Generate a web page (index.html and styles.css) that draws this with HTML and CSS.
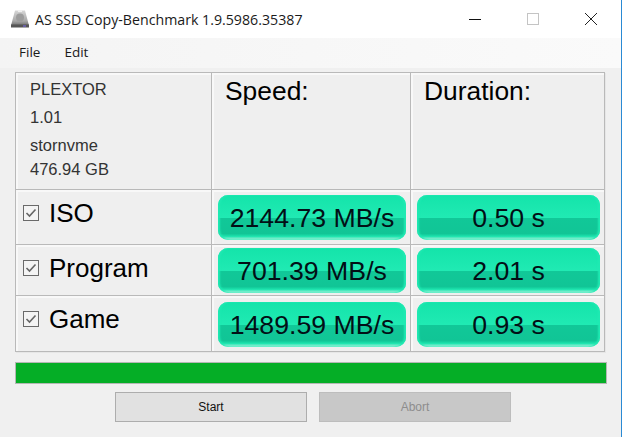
FILE: index.html
```html
<!DOCTYPE html>
<html lang="en">
<head>
<meta charset="utf-8">
<title>AS SSD Copy-Benchmark</title>
<link rel="stylesheet" href="styles.css">
</head>
<body>
<div class="window">
  <header class="titlebar">
    <svg class="appicon" width="20" height="20" viewBox="0 0 20 20">
      <defs>
        <linearGradient id="d" x1="0" y1="0" x2="0" y2="1">
          <stop offset="0" stop-color="#d6d6d6"/><stop offset="0.7" stop-color="#a8a8a8"/><stop offset="1" stop-color="#6e6e6e"/>
        </linearGradient>
      </defs>
      <path d="M5 1.5h10l4 15H1z" fill="url(#d)"/>
      <rect x="1" y="15.5" width="18" height="3" fill="#555"/>
      <rect x="13" y="16.5" width="3" height="1" fill="#7a6cf0"/>
      <circle cx="10" cy="8.5" r="4" fill="#9c9c9c"/>
      <rect x="8" y="1" width="4" height="2" fill="#efefef"/>
    </svg>
    <span class="title">AS SSD Copy-Benchmark 1.9.5986.35387</span>
    <div class="controls">
      <svg width="14" height="14" viewBox="0 0 14 14"><path d="M1 7.5h12" stroke="#111" stroke-width="1"/></svg>
      <svg width="14" height="14" viewBox="0 0 14 14"><rect x="1.5" y="1.5" width="11" height="11" fill="none" stroke="#c4c4c4"/></svg>
      <svg width="14" height="14" viewBox="0 0 14 14"><path d="M1 1l12 12M13 1L1 13" stroke="#222" stroke-width="1" fill="none"/></svg>
    </div>
  </header>
  <nav class="menubar"><span>File</span><span>Edit</span></nav>
  <main class="content">
    <div class="grid">
      <div class="cell info"><div>PLEXTOR</div><div>1.01</div><div>stornvme</div><div class="capacity">476.94 GB</div></div>
      <div class="cell heading">Speed:</div>
      <div class="cell heading">Duration:</div>

      <div class="cell test"><span class="check"><svg width="14" height="14" viewBox="0 0 14 14"><path d="M2.5 7l3 3 6-6.5" fill="none" stroke="#666" stroke-width="1.6"/></svg></span><span class="label">ISO</span></div>
      <div class="cell result"><div class="pill">2144.73 MB/s</div></div>
      <div class="cell result"><div class="pill">0.50 s</div></div>

      <div class="cell test"><span class="check"><svg width="14" height="14" viewBox="0 0 14 14"><path d="M2.5 7l3 3 6-6.5" fill="none" stroke="#666" stroke-width="1.6"/></svg></span><span class="label">Program</span></div>
      <div class="cell result"><div class="pill">701.39 MB/s</div></div>
      <div class="cell result"><div class="pill">2.01 s</div></div>

      <div class="cell test"><span class="check"><svg width="14" height="14" viewBox="0 0 14 14"><path d="M2.5 7l3 3 6-6.5" fill="none" stroke="#666" stroke-width="1.6"/></svg></span><span class="label">Game</span></div>
      <div class="cell result"><div class="pill">1489.59 MB/s</div></div>
      <div class="cell result"><div class="pill">0.93 s</div></div>
    </div>
    <div class="progress"></div>
    <div class="buttons">
      <button class="btn" type="button">Start</button>
      <button class="btn disabled" type="button" disabled>Abort</button>
    </div>
  </main>
</div>
</body>
</html>
```
FILE: styles.css
```css
* { box-sizing: border-box; }
html, body { margin: 0; height: 100%; background: #fff; }
body { overflow: hidden; }
.window {
  width: 622px; height: 437px;
  display: flex; flex-direction: column;
  background: #f0f0f0;
  border-right: 1px solid #2a8ad4;
  font-family: "Liberation Sans", Arial, sans-serif;
  color: #000;
}
.titlebar {
  height: 38px; flex: none;
  background: #fff;
  display: flex; align-items: center;
  padding-left: 10px;
}
.appicon { flex: none; margin-right: 5px; }
.title {
  font-family: "Open Sans", sans-serif;
  font-size: 14.2px; color: #1a1a1a; white-space: nowrap;
}
.controls { margin-left: auto; display: flex; gap: 44px; padding-right: 23px; }
.menubar {
  height: 30px; flex: none;
  display: flex; gap: 24px; align-items: center;
  padding: 0 0 3px 19px;
  background: linear-gradient(90deg, #f4f4f4, #fafafa);
  font-family: "Open Sans", sans-serif;
  font-size: 13.5px; color: #1a1a1a;
}
.content { padding: 4px 0 0 15px; flex: 1; }
.grid {
  width: 590px; height: 280px;
  display: grid;
  grid-template-columns: 195px 198px 193px;
  grid-template-rows: 116px 54px 50px 55px;
  gap: 1px;
  background: #b9b9b9;
  border: 1px solid #b9b9b9;
  box-shadow: 1px 1px 0 #e6e6e6;
}
.cell { background: #efefef; box-shadow: inset 2px 2px 0 #f8f8f8; }
.info {
  padding: 7px 0 0 14px;
  font-size: 16.5px; color: #333;
  display: flex; flex-direction: column; gap: 10px;
  line-height: 18px;
}
.capacity { margin-top: -4px; }
.heading { padding: 2px 0 0 13px; font-size: 26.4px; line-height: 32px; }
.test { display: flex; align-items: flex-start; padding: 7px 0 0 7px; font-size: 26px; line-height: 30px; }
.label { margin-top: 1px; }
.check {
  width: 16px; height: 16px; flex: none;
  margin: 8px 10px 0 0;
  border: 1px solid #6a6a6a; background: #f4f4f4;
  display: flex; align-items: center; justify-content: center;
}
.result { display: flex; align-items: center; padding: 1px 4px 0 6px; }
.pill {
  flex: 1;
  height: 45px;
  padding-top: 2px;
  border-radius: 10px;
  background: linear-gradient(#14e4aa 0%, #20eab3 50%, #11c898 52%, #11c596 86%, #1ce4ae 92%, #bff4e4 100%);
  box-shadow: inset 2px 0 2px #20eab3, inset -2px 0 2px #20eab3;
  display: flex; align-items: center; justify-content: center;
  font-size: 26.7px; color: #020f16; white-space: nowrap;
}
.progress {
  width: 592px; height: 22px; margin-top: 10px;
  background: #05ae26; border: 1px solid #b4b8b4;
}
.buttons { display: flex; gap: 12px; margin: 8px 0 0 100px; }
.btn {
  width: 192px; height: 30px; padding: 0;
  background: #e1e1e1; border: 1px solid #adadad;
  font-family: "Liberation Sans", Arial, sans-serif;
  font-size: 12px; color: #111;
}
.disabled { background: #c8c8c8; border-color: #bdbdbd; color: #8d8d8d; }
```
